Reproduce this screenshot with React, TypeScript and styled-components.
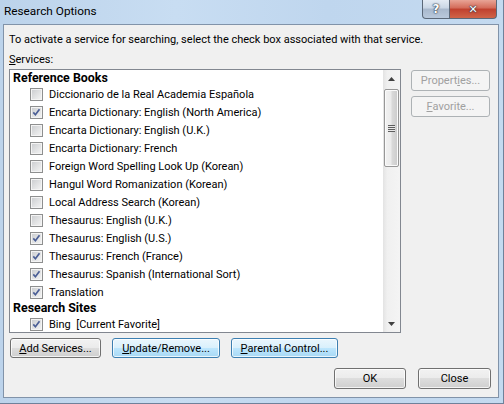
import styled, { createGlobalStyle, css } from "styled-components";

const GlobalStyle = createGlobalStyle`
  html, body {
    margin: 0;
    padding: 0;
    background: #ffffff;
  }
  body {
    font-family: "Roboto", "Liberation Sans", sans-serif;
    font-size: 11px;
    color: #000;
  }
`;

type Item = { label: string; checked: boolean };
type Section = { title: string; items: Item[] };

const sections: Section[] = [
  {
    title: "Reference Books",
    items: [
      { label: "Diccionario de la Real Academia Española", checked: false },
      { label: "Encarta Dictionary: English (North America)", checked: true },
      { label: "Encarta Dictionary: English (U.K.)", checked: false },
      { label: "Encarta Dictionary: French", checked: false },
      { label: "Foreign Word Spelling Look Up (Korean)", checked: false },
      { label: "Hangul Word Romanization (Korean)", checked: false },
      { label: "Local Address Search (Korean)", checked: false },
      { label: "Thesaurus: English (U.K.)", checked: false },
      { label: "Thesaurus: English (U.S.)", checked: true },
      { label: "Thesaurus: French (France)", checked: true },
      { label: "Thesaurus: Spanish (International Sort)", checked: true },
      { label: "Translation", checked: true },
    ],
  },
  {
    title: "Research Sites",
    items: [{ label: "Bing  [Current Favorite]", checked: true }],
  },
];

export default function App() {
  return (
    <>
      <GlobalStyle />
      <Window>
        <TitleBar>
          <Title>Research Options</Title>
          <CaptionButtons>
            <CaptionButton $kind="help">?</CaptionButton>
            <CaptionButton $kind="close">✕</CaptionButton>
          </CaptionButtons>
        </TitleBar>

        <Client>
          <Info>To activate a service for searching, select the check box associated with that service.</Info>
          <FieldLabel>
            <u>S</u>ervices:
          </FieldLabel>

          <MainRow>
            <ListBox>
              <ListContent>
                {sections.map((section) => (
                  <div key={section.title}>
                    <GroupHeading>{section.title}</GroupHeading>
                    {section.items.map((item) => (
                      <ItemRow key={item.label}>
                        <CheckBox>
                          {item.checked && <CheckMark />}
                        </CheckBox>
                        <ItemText>{item.label}</ItemText>
                      </ItemRow>
                    ))}
                  </div>
                ))}
              </ListContent>
              <ScrollBar>
                <ArrowButton>
                  <Arrow dir="up" />
                </ArrowButton>
                <Thumb>
                  <Grip />
                </Thumb>
                <TrackFill />
                <ArrowButton>
                  <Arrow dir="down" />
                </ArrowButton>
              </ScrollBar>
            </ListBox>

            <SideButtons>
              <Button $width={79} $height={21} $disabled>
                Propert<u>i</u>es...
              </Button>
              <Button $width={79} $height={21} $disabled>
                <u>F</u>avorite...
              </Button>
            </SideButtons>
          </MainRow>

          <ActionRow>
            <Button $width={91} $height={20}>
              <u>A</u>dd Services...
            </Button>
            <Button $width={108} $height={20} $hot>
              <u>U</u>pdate/Remove...
            </Button>
            <Button $width={107} $height={20} $hot>
              <u>P</u>arental Control...
            </Button>
          </ActionRow>

          <FooterRow>
            <Button $width={72} $height={21}>OK</Button>
            <Button $width={73} $height={21}>Close</Button>
          </FooterRow>
        </Client>
      </Window>
    </>
  );
}

const CheckMark = () => (
  <svg width="11" height="11" viewBox="0 0 11 11">
    <path d="M2.3 5.4 L4.4 7.7 L8.5 2.2" fill="none" stroke="#4b5e96" strokeWidth="1.7" strokeLinejoin="miter" />
  </svg>
);

const Arrow = ({ dir }: { dir: "up" | "down" }) => (
  <svg width="7" height="4" viewBox="0 0 7 4">
    {dir === "up" ? (
      <polygon points="3.5,0 7,4 0,4" fill="#404040" />
    ) : (
      <polygon points="0,0 7,0 3.5,4" fill="#404040" />
    )}
  </svg>
);

// Styled components
const Window = styled.div`
  width: 504px;
  height: 404px;
  display: flex;
  flex-direction: column;
  box-sizing: border-box;
  background: linear-gradient(to right, #bcd3eb 0%, #c8ddf2 35%, #bfd6ee 65%, #c4daf0 100%);
  border-right: 1px solid #6f819a;
  border-bottom: 1px solid #6f819a;
`;

const TitleBar = styled.div`
  height: 24px;
  flex: none;
  display: flex;
  align-items: flex-start;
`;

const Title = styled.div`
  flex: 1;
  padding: 3px 0 0 4px;
  font-size: 11.8px;
  line-height: 16px;
  color: #000;
`;

const CaptionButtons = styled.div`
  display: flex;
  margin-right: 6px;
`;

const CaptionButton = styled.div<{ $kind: "help" | "close" }>`
  height: 19px;
  box-sizing: border-box;
  display: flex;
  align-items: center;
  justify-content: center;
  border: 1px solid #5b6878;
  border-top: none;
  font-family: "DejaVu Sans", sans-serif;
  font-weight: bold;
  color: #ffffff;
  text-shadow: 0 0 1px #30394a, 0 0 1px #30394a, 0 0 2px #30394a;
  ${({ $kind }) =>
    $kind === "help"
      ? css`
          width: 28px;
          border-bottom-left-radius: 4px;
          font-size: 12px;
          background: linear-gradient(to bottom, #e3ebf4 0%, #c9d6e5 45%, #a8b8cc 50%, #b9c9dc 100%);
        `
      : css`
          width: 47px;
          border-left: none;
          border-bottom-right-radius: 4px;
          font-size: 11px;
          background: linear-gradient(to bottom, #e8a496 0%, #d36a58 45%, #c0402e 50%, #d06448 100%);
        `}
`;

const Client = styled.div`
  flex: 1;
  margin: 0 4px 5px 3px;
  background: #f0f0f0;
  border: 1px solid #8193a9;
  display: flex;
  flex-direction: column;
  padding: 7px 7px 0 5px;
`;

const Info = styled.div`
  line-height: 15px;
  white-space: nowrap;
`;

const FieldLabel = styled.div`
  margin-top: 5px;
  line-height: 15px;
`;

const MainRow = styled.div`
  display: flex;
  gap: 10px;
  margin-top: 2px;
`;

const ListBox = styled.div`
  width: 392px;
  height: 264px;
  box-sizing: border-box;
  border: 1px solid #828790;
  background: #ffffff;
  display: flex;
`;

const ListContent = styled.div`
  flex: 1;
  overflow: hidden;
  padding-top: 1px;
`;

const GroupHeading = styled.div`
  height: 14px;
  line-height: 14px;
  padding-left: 3px;
  font-size: 12.4px;
  font-weight: bold;
`;

const ItemRow = styled.div`
  height: 18px;
  display: flex;
  align-items: center;
  gap: 6px;
  padding-left: 20px;
`;

const CheckBox = styled.div`
  width: 13px;
  height: 13px;
  box-sizing: border-box;
  border: 1px solid #8e8f8f;
  background: linear-gradient(135deg, #c9cbce 0%, #e2e3e4 55%, #f5f5f5 100%);
  box-shadow: inset 0 0 0 1px #f4f4f4;
  display: flex;
  align-items: center;
  justify-content: center;
  flex: none;
`;

const ItemText = styled.span`
  white-space: pre;
  line-height: 15px;
`;

const ScrollBar = styled.div`
  width: 17px;
  flex: none;
  display: flex;
  flex-direction: column;
  background: linear-gradient(to right, #e3e3e3 0%, #f0f0f0 25%, #f4f4f4 100%);
`;

const ArrowButton = styled.div`
  height: 17px;
  flex: none;
  display: flex;
  align-items: center;
  justify-content: center;
`;

const Thumb = styled.div`
  height: 78px;
  margin: 2px 1px 0 1px;
  box-sizing: border-box;
  border: 1px solid #979797;
  border-radius: 2px;
  background: linear-gradient(to right, #f2f2f2 0%, #ebebeb 45%, #d9d9d9 55%, #cbcbcb 100%);
  box-shadow: inset 0 0 0 1px #fafafa;
  display: flex;
  align-items: center;
  justify-content: center;
`;

const Grip = styled.div`
  width: 7px;
  height: 7px;
  background: repeating-linear-gradient(
    to bottom,
    #5e5e5e 0px,
    #5e5e5e 1px,
    #e8e8e8 1px,
    #e8e8e8 2px
  );
`;

const TrackFill = styled.div`
  flex: 1;
`;

const SideButtons = styled.div`
  display: flex;
  flex-direction: column;
  gap: 5px;
  padding-top: 1px;
`;

const Button = styled.div<{ $width: number; $height: number; $disabled?: boolean; $hot?: boolean }>`
  width: ${({ $width }) => $width}px;
  height: ${({ $height }) => $height}px;
  box-sizing: border-box;
  border-radius: 3px;
  display: flex;
  align-items: center;
  justify-content: center;
  white-space: nowrap;
  border: 1px solid #707070;
  color: #000;
  background: linear-gradient(to bottom, #f2f2f2 0%, #ebebeb 49%, #dddddd 50%, #cfcfcf 100%);
  box-shadow: inset 0 0 0 1px rgba(255, 255, 255, 0.75);
  ${({ $hot }) =>
    $hot &&
    css`
      border-color: #3c7fb1;
      background: linear-gradient(to bottom, #eaf6fd 0%, #d9f0fc 49%, #bee6fd 50%, #a7d9f5 100%);
    `}
  ${({ $disabled }) =>
    $disabled &&
    css`
      border-color: #adb2b5;
      color: #a0a0a0;
      background: #f4f4f4;
      box-shadow: none;
    `}
`;

const ActionRow = styled.div`
  display: flex;
  gap: 11px;
  margin-top: 5px;
  padding-left: 1px;
`;

const FooterRow = styled.div`
  display: flex;
  justify-content: flex-end;
  gap: 12px;
  margin-top: 10px;
`;
